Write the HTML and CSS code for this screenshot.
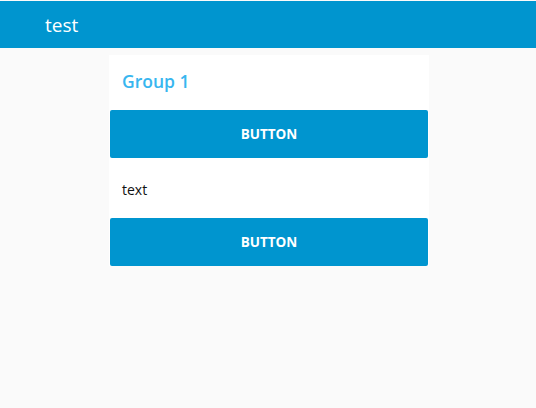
FILE: index.html
```html
<!DOCTYPE html>
<html>
<head>
<meta charset="utf-8">
<link rel="stylesheet" href="styles.css">
</head>
<body>
<header class="appbar"><span class="title">test</span></header>
<main class="content">
  <section class="group">
    <h2 class="group-title">Group 1</h2>
    <button class="btn">BUTTON</button>
    <p class="text">text</p>
    <button class="btn">BUTTON</button>
  </section>
</main>
</body>
</html>
```
FILE: styles.css
```css
html, body {
  margin: 0;
  padding: 0;
  background: #fafafa;
  font-family: "Open Sans", "Noto Sans", sans-serif;
}
body {
  padding-top: 1px;
}
.appbar {
  height: 47px;
  background: #0095cf;
  display: flex;
  align-items: center;
  padding-left: 45px;
}
.title {
  color: #fff;
  font-size: 19px;
  line-height: 1;
  margin-top: 2px;
}
.content {
  display: flex;
  justify-content: center;
  padding-top: 7px;
}
.group {
  width: 320px;
  background: #fff;
  display: flex;
  flex-direction: column;
  align-items: center;
  margin-left: 2px;
}
.group-title {
  align-self: stretch;
  margin: 0;
  padding: 13px 13px 0 13px;
  height: 43px;
  box-sizing: border-box;
  font-size: 17.5px;
  font-weight: 600;
  color: #38b6ef;
  line-height: 26px;
}
.btn {
  width: 318px;
  height: 48px;
  border: none;
  border-radius: 2px;
  background: #0095cf;
  color: #fff;
  font-family: inherit;
  font-size: 13.5px;
  font-weight: 700;
  padding: 0;
  margin: 12px 0 0 0;
}
.text {
  align-self: stretch;
  margin: 0;
  padding: 2px 13px 0 13px;
  box-sizing: border-box;
  height: 60px;
  display: flex;
  align-items: center;
  font-size: 14px;
  color: #111;
}
.text + .btn {
  margin-top: 0;
}
```
